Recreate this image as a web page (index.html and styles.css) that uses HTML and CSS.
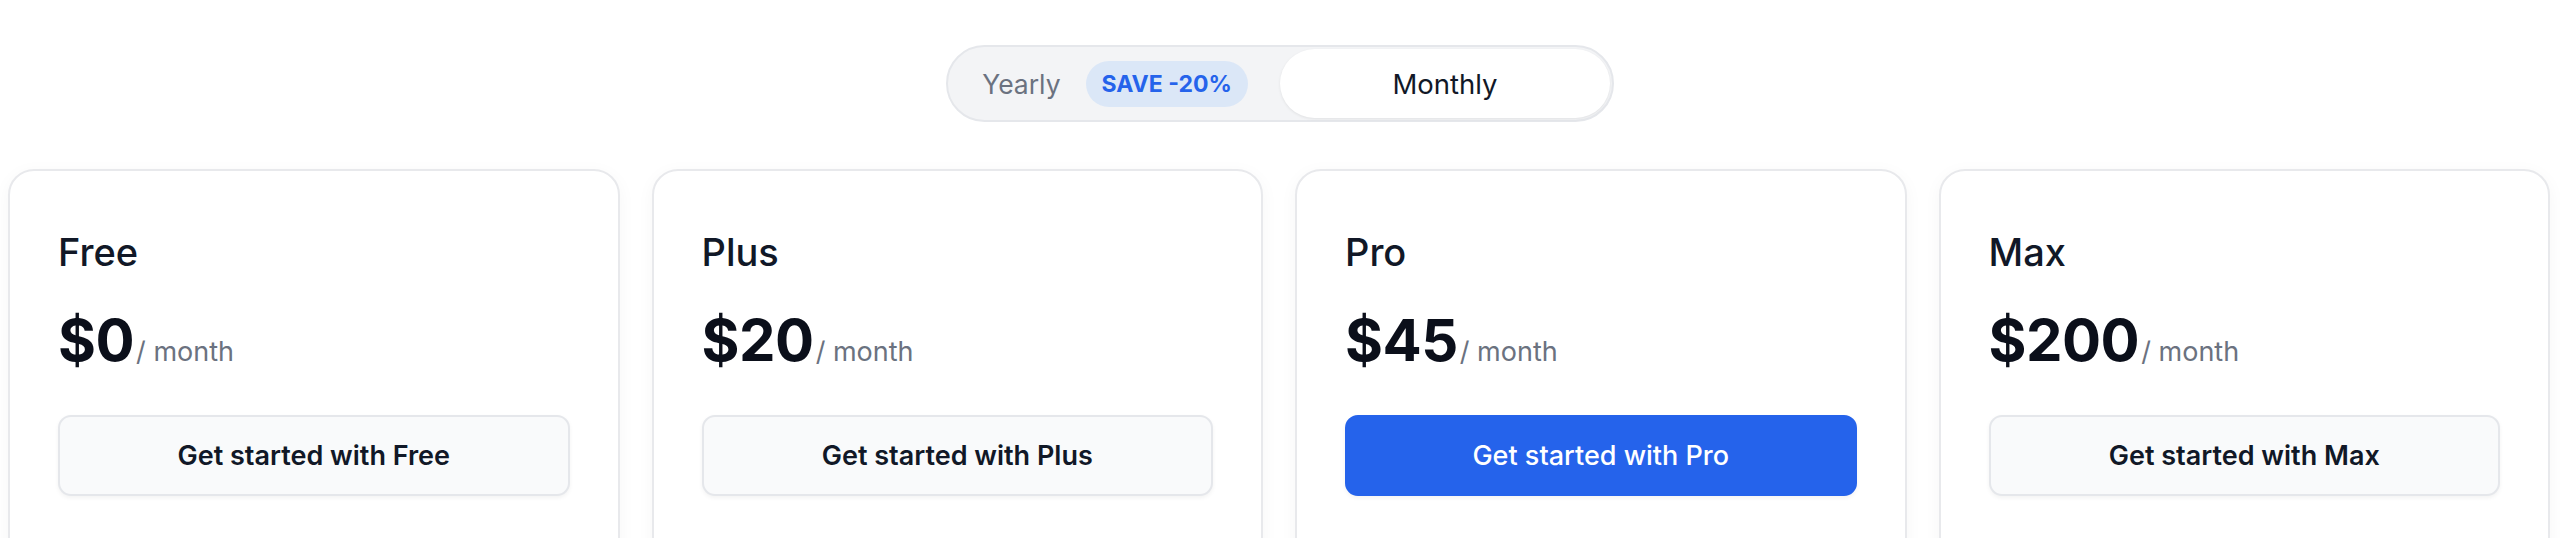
FILE: index.html
```html
<!DOCTYPE html>
<html lang="en">
<head>
<meta charset="utf-8">
<title>Pricing</title>
<link rel="stylesheet" href="styles.css">
</head>
<body>
<main class="page">
  <div class="toggle-wrap">
    <div class="toggle">
      <button class="toggle-btn">
        <span class="toggle-label">Yearly</span>
        <span class="badge">SAVE -20%</span>
      </button>
      <button class="toggle-btn active">
        <span class="toggle-label">Monthly</span>
      </button>
    </div>
  </div>
  <section class="plans">
    <article class="card">
      <h3 class="plan-name">Free</h3>
      <div class="price"><span class="amount">$0</span><span class="period">/ month</span></div>
      <button class="cta">Get started with Free</button>
    </article>
    <article class="card">
      <h3 class="plan-name">Plus</h3>
      <div class="price"><span class="amount">$20</span><span class="period">/ month</span></div>
      <button class="cta">Get started with Plus</button>
    </article>
    <article class="card">
      <h3 class="plan-name">Pro</h3>
      <div class="price"><span class="amount">$45</span><span class="period">/ month</span></div>
      <button class="cta primary">Get started with Pro</button>
    </article>
    <article class="card">
      <h3 class="plan-name">Max</h3>
      <div class="price"><span class="amount">$200</span><span class="period">/ month</span></div>
      <button class="cta">Get started with Max</button>
    </article>
  </section>
</main>
</body>
</html>
```
FILE: styles.css
```css
* { box-sizing: border-box; }
html, body { margin: 0; padding: 0; background: #ffffff; }
body {
  font-family: Inter, "Noto Sans", "Liberation Sans", sans-serif;
  color: #111827;
  overflow: hidden;
}
.page { padding-top: 45px; }

.toggle-wrap { display: flex; justify-content: center; }
.toggle {
  display: flex;
  width: 668px;
  padding: 2px;
  background: #f3f4f6;
  border: 2px solid #e5e7eb;
  border-radius: 999px;
}
.toggle-btn {
  flex: 1;
  height: 69px;
  display: flex;
  align-items: center;
  justify-content: center;
  gap: 25px;
  border: 0;
  background: transparent;
  border-radius: 999px;
  font-family: inherit;
  padding: 0;
}
.toggle-label {
  font-size: 26.5px;
  line-height: 36px;
  color: #6b7280;
}
.toggle-btn.active {
  background: #ffffff;
  box-shadow: 0 1px 3px rgba(0,0,0,0.08);
}
.toggle-btn.active .toggle-label { color: #111827; font-size: 27.5px; }
.badge {
  display: inline-block;
  padding: 8px 16px;
  line-height: 30px;
  font-size: 23px;
  font-weight: 700;
  color: #2563eb;
  background: #dbe7f7;
  border-radius: 999px;
}

.plans {
  display: grid;
  grid-template-columns: repeat(4, 1fr);
  gap: 32px;
  padding: 0 10px 0 8px;
  margin-top: 47px;
}
.card {
  background: #ffffff;
  border: 2px solid #e8e9ec;
  border-radius: 26px;
  padding: 58px 48px 48px;
  min-height: 520px;
  box-shadow: 0 4px 18px rgba(0,0,0,0.04);
}
.plan-name {
  margin: 0;
  font-size: 38px;
  line-height: 46px;
  font-weight: 500;
  color: #111827;
}
.price {
  display: flex;
  align-items: baseline;
  margin-top: 33px;
}
.amount {
  font-size: 58px;
  line-height: 64px;
  font-weight: 700;
  color: #0b0f1a;
  letter-spacing: -0.5px;
}
.period {
  margin-left: 2px;
  font-size: 27px;
  color: #6b7280;
}
.cta {
  display: block;
  width: 100%;
  margin-top: 43px;
  padding: 19.5px 16px;
  line-height: 38px;
  font-family: inherit;
  font-size: 27px;
  font-weight: 600;
  color: #111827;
  background: #f9fafb;
  border: 2px solid #e5e7eb;
  border-radius: 13px;
  box-shadow: 0 2px 4px rgba(0,0,0,0.05);
}
.cta.primary {
  background: #2563eb;
  border-color: #2563eb;
  color: #ffffff;
  font-weight: 500;
}
```
